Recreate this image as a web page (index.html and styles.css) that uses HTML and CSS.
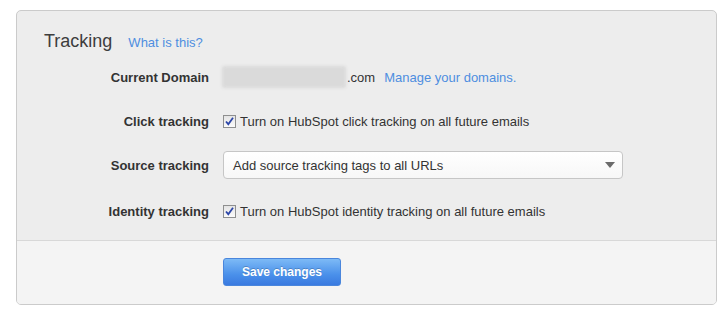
FILE: index.html
```html
<!DOCTYPE html>
<html lang="en">
<head>
<meta charset="UTF-8">
<title>Tracking settings</title>
<link rel="stylesheet" href="styles.css">
</head>
<body>
<div class="panel">
<div class="panel-body">
<div class="panel-title">
<h2>Tracking</h2>
<a href="#" class="link">What is this?</a>
</div>

<div class="row">
<div class="label">Current Domain</div>
<div class="field">
<span class="domain-blur"></span><span class="domain-tld">.com</span>
<a href="#" class="link manage">Manage your domains.</a>
</div>
</div>

<div class="row">
<div class="label">Click tracking</div>
<div class="field">
<span class="checkbox"><svg width="11" height="11" viewBox="0 0 11 11"><path d="M2 5.5 L4.3 8.2 L9 1.8" fill="none" stroke="#2c46a8" stroke-width="1.8"/></svg></span>
<span class="check-text">Turn on HubSpot click tracking on all future emails</span>
</div>
</div>

<div class="row">
<div class="label">Source tracking</div>
<div class="field">
<div class="select">
<span>Add source tracking tags to all URLs</span>
<span class="caret"></span>
</div>
</div>
</div>

<div class="row row-last">
<div class="label">Identity tracking</div>
<div class="field">
<span class="checkbox"><svg width="11" height="11" viewBox="0 0 11 11"><path d="M2 5.5 L4.3 8.2 L9 1.8" fill="none" stroke="#2c46a8" stroke-width="1.8"/></svg></span>
<span class="check-text">Turn on HubSpot identity tracking on all future emails</span>
</div>
</div>
</div>

<div class="panel-footer">
<button type="button" class="save-btn">Save changes</button>
</div>
</div>
</body>
</html>
```

FILE: styles.css
```css
body {
margin: 0;
background: #fff;
font-family: "Liberation Sans", Arial, sans-serif;
font-size: 13px;
color: #333;
}
.panel {
margin: 10px 6px 0 16px;
border: 1px solid #cbcbcb;
border-radius: 5px;
background: #ededed;
overflow: hidden;
}
.panel-body {
padding: 19px 0 15px 0;
}
.panel-title {
display: flex;
align-items: baseline;
gap: 16px;
padding-left: 27px;
height: 22px;
margin-bottom: 11px;
}
.panel-title h2 {
margin: 0;
font-size: 18px;
font-weight: normal;
line-height: 22px;
color: #3d3d3d;
}
.link {
color: #4d8ee0;
text-decoration: none;
}
.row {
display: grid;
grid-template-columns: 192px 1fr;
column-gap: 14px;
align-items: center;
height: 28px;
margin-bottom: 16px;
}
.row-last {
margin-top: 18px;
margin-bottom: 0;
}
.label {
text-align: right;
font-weight: bold;
color: #333;
}
.field {
display: flex;
align-items: center;
}
.domain-blur {
width: 124px;
height: 22px;
margin-left: -1px;
background: #dadada;
border-radius: 2px;
filter: blur(1.5px);
}
.domain-tld {
margin-left: 1px;
}
.manage {
margin-left: 9px;
}
.checkbox {
box-sizing: border-box;
width: 13px;
height: 13px;
border: 1px solid #8e8f8f;
background: linear-gradient(#e4e4e4, #fbfbfb);
display: flex;
align-items: center;
justify-content: center;
margin-right: 4px;
}
.check-text {
color: #333;
}
.select {
box-sizing: border-box;
width: 400px;
height: 28px;
border: 1px solid #c6c6c6;
border-radius: 4px;
background: linear-gradient(#ffffff, #f7f7f7);
display: flex;
align-items: center;
justify-content: space-between;
padding: 0 7px 0 9px;
color: #333;
}
.caret {
width: 0;
height: 0;
border-left: 5px solid transparent;
border-right: 5px solid transparent;
border-top: 6px solid #6b6b6b;
}
.panel-footer {
background: #f4f4f4;
border-top: 1px solid #d8d8d8;
height: 64px;
padding: 17px 0 0 206px;
box-sizing: border-box;
}
.save-btn {
width: 118px;
height: 28px;
border: 1px solid #4a86dc;
border-radius: 3px;
background: linear-gradient(#7dbaf6, #4a90ea 60%, #3a7ae0);
color: #fff;
font-family: "Liberation Sans", Arial, sans-serif;
font-size: 12px;
font-weight: bold;
text-shadow: 0 -1px 0 rgba(0,0,0,0.2);
cursor: pointer;
padding: 0;
}
```
